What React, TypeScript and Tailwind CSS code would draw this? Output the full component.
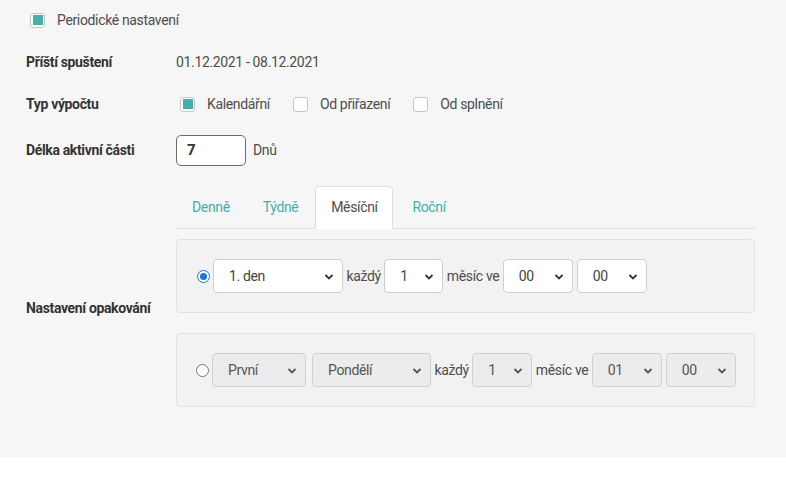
import React from 'react'

const font = { fontFamily: 'Roboto, "Liberation Sans", sans-serif' }

function Check({ checked, label }: { checked?: boolean; label: string }) {
  return (
    <label className="flex items-center">
      <span className="w-[15px] h-[15px] rounded-[3px] border border-[#c8c8c8] bg-white flex items-center justify-center">
        {checked && <span className="w-[10px] h-[10px] bg-[#45b0a9]" />}
      </span>
      <span className="ml-[12px] text-[14px] text-[#4d4d4d] tracking-[-0.025em]">{label}</span>
    </label>
  )
}

function Radio({ checked }: { checked?: boolean }) {
  return checked ? (
    <span className="w-[13px] h-[13px] rounded-full border-[1.5px] border-[#1a73e8] bg-white flex items-center justify-center shrink-0">
      <span className="w-[7px] h-[7px] rounded-full bg-[#1a73e8]" />
    </span>
  ) : (
    <span className="w-[13px] h-[13px] rounded-full border border-[#767676] bg-white shrink-0" />
  )
}

function Select({ value, w, disabled }: { value: string; w: string; disabled?: boolean }) {
  return (
    <div
      className={`relative h-[34px] rounded-[4px] border ${w} ${
        disabled ? 'bg-[#ececec] border-[#d0d0d0] text-[#555]' : 'bg-white border-[#cfcfcf] text-[#444]'
      } flex items-center pl-[15px] text-[14px] tracking-[-0.025em]`}
    >
      {value}
      <svg className="absolute right-[8px] top-[13px] w-[10px] h-[8px]" viewBox="0 0 10 8">
        <path d="M1.5 2 L5 5.5 L8.5 2" fill="none" stroke={disabled ? '#555' : '#333'} strokeWidth="1.8" />
      </svg>
    </div>
  )
}

function Txt({ children }: { children: React.ReactNode }) {
  return <span className="text-[14px] text-[#4d4d4d] tracking-[-0.025em] px-[3.5px]">{children}</span>
}

export default function App() {
  return (
    <div style={font} className="w-[786px] h-[480px] bg-white">
      <div className="bg-[#f6f6f6] h-[457px] pl-[26px] pr-[31px] pt-[12px]">
        <div className="pl-[4px] h-[16px] flex items-center">
          <Check checked label="Periodické nastavení" />
        </div>

        <div className="flex items-center mt-[25px] h-[18px]">
          <div className="w-[150px] text-[14px] font-bold text-[#333] tracking-[-0.025em]">Příští spuštení</div>
          <div className="text-[14px] text-[#4d4d4d] tracking-[-0.025em]">01.12.2021 - 08.12.2021</div>
        </div>

        <div className="flex items-center mt-[24px] h-[18px]">
          <div className="w-[150px] text-[14px] font-bold text-[#333] tracking-[-0.025em]">Typ výpočtu</div>
          <div className="flex items-center pl-[4px] gap-[23px]">
            <Check checked label="Kalendářní" />
            <Check label="Od přiřazení" />
            <Check label="Od splnění" />
          </div>
        </div>

        <div className="flex items-center mt-[22px]">
          <div className="w-[150px] text-[14px] font-bold text-[#333] tracking-[-0.025em]">Délka aktivní části</div>
          <div className="w-[70px] h-[31px] rounded-[5px] border border-[#6b6b6b] bg-white flex items-center pl-[10px] text-[15px] font-bold text-[#333]">
            7
          </div>
          <span className="ml-[7px] text-[14px] text-[#4d4d4d] tracking-[-0.025em]">Dnů</span>
        </div>

        <div className="flex mt-[20px]">
          <div className="w-[150px] shrink-0" />
          <div className="flex-1">
            <div className="flex h-[43px] border-b border-[#dedede]">
              <div className="px-[16px] flex items-center text-[14px] text-[#3fb0a8] tracking-[-0.025em]">Denně</div>
              <div className="px-[17px] flex items-center text-[14px] text-[#3fb0a8] tracking-[-0.025em]">Týdně</div>
              <div className="w-[78px] -mb-px bg-white border border-[#dedede] border-b-white rounded-t-[4px] flex items-center justify-center text-[14px] text-[#4d4d4d] tracking-[-0.025em]">
                Měsíční
              </div>
              <div className="px-[19px] flex items-center text-[14px] text-[#3fb0a8] tracking-[-0.025em]">Roční</div>
            </div>
          </div>
        </div>

        <div className="flex mt-[10px]">
          <div className="w-[150px] shrink-0 pt-[59px] text-[14px] font-bold text-[#333] tracking-[-0.025em]">
            Nastavení opakování
          </div>
          <div className="flex-1 flex flex-col gap-[20px]">
            <div className="h-[74px] rounded-[4px] border border-[#e3e3e3] bg-[#f2f2f2] flex items-center pl-[20px]">
              <Radio checked />
              <div className="ml-[3px] flex items-center">
                <Select value="1. den" w="w-[130px]" />
                <Txt>každý</Txt>
                <Select value="1" w="w-[59px]" />
                <Txt>měsíc ve</Txt>
                <Select value="00" w="w-[70px]" />
                <div className="w-[4px]" />
                <Select value="00" w="w-[70px]" />
              </div>
            </div>
            <div className="h-[74px] rounded-[4px] border border-[#e3e3e3] bg-[#f2f2f2] flex items-center pl-[19px]">
              <Radio />
              <div className="ml-[3px] flex items-center">
                <Select value="První" w="w-[94px]" disabled />
                <div className="w-[6px]" />
                <Select value="Pondělí" w="w-[119px]" disabled />
                <Txt>každý</Txt>
                <Select value="1" w="w-[60px]" disabled />
                <Txt>měsíc ve</Txt>
                <Select value="01" w="w-[70px]" disabled />
                <div className="w-[4px]" />
                <Select value="00" w="w-[70px]" disabled />
              </div>
            </div>
          </div>
        </div>
      </div>
    </div>
  )
}
